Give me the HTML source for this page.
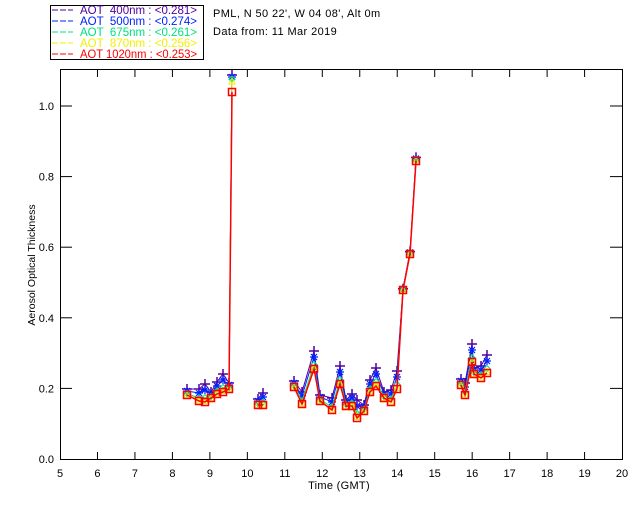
<!DOCTYPE html>
<html><head><meta charset="utf-8"><style>
html,body{margin:0;padding:0;background:#fff;width:640px;height:512px;overflow:hidden}
svg{display:block;font-family:"Liberation Sans",sans-serif}
</style></head><body>
<svg id="s" width="640" height="512" viewBox="0 0 640 512" xmlns="http://www.w3.org/2000/svg">
<rect x="50.5" y="5.5" width="153" height="54" fill="none" stroke="#000"/>
<g font-size="11.5">
<line x1="52" y1="10" x2="73" y2="10" stroke="#5000a0" stroke-dasharray="6,2"/><text x="80" y="14" fill="#5000a0" xml:space="preserve" textLength="117" lengthAdjust="spacingAndGlyphs">AOT  400nm : &lt;0.281&gt;</text>
<line x1="52" y1="21" x2="73" y2="21" stroke="#0020ff" stroke-dasharray="6,2"/><text x="80" y="25" fill="#0020ff" xml:space="preserve" textLength="117" lengthAdjust="spacingAndGlyphs">AOT  500nm : &lt;0.274&gt;</text>
<line x1="52" y1="32" x2="73" y2="32" stroke="#00e080" stroke-dasharray="6,2"/><text x="80" y="36" fill="#00e080" xml:space="preserve" textLength="117" lengthAdjust="spacingAndGlyphs">AOT  675nm : &lt;0.261&gt;</text>
<line x1="52" y1="43" x2="73" y2="43" stroke="#f0f000" stroke-dasharray="6,2"/><text x="80" y="47" fill="#f0f000" xml:space="preserve" textLength="117" lengthAdjust="spacingAndGlyphs">AOT  870nm : &lt;0.256&gt;</text>
<line x1="52" y1="54" x2="73" y2="54" stroke="#ff0000" stroke-dasharray="6,2"/><text x="80" y="58" fill="#ff0000" xml:space="preserve" textLength="117" lengthAdjust="spacingAndGlyphs">AOT 1020nm : &lt;0.253&gt;</text>
</g>
<g font-size="11" letter-spacing="0.4">
<text x="213" y="17" fill="#000">PML, N 50 22', W 04 08', Alt 0m</text>
<text x="213" y="35" fill="#000">Data from: 11 Mar 2019</text>
</g>
<rect x="60.5" y="69.5" width="562" height="390" fill="none" stroke="#000"/>
<g id="ax" stroke="#000"></g>
<g id="lab" font-size="11" fill="#000"></g>
<text x="339" y="489" font-size="11" text-anchor="middle" letter-spacing="0.3">Time (GMT)</text>
<text transform="translate(35,265) rotate(-90)" font-size="10.5" text-anchor="middle">Aerosol Optical Thickness</text>
<g id="dat"></g>
</svg>
<script>
var ns="http://www.w3.org/2000/svg";
function el(p,t,a,txt){var e=document.createElementNS(ns,t);for(var k in a)e.setAttribute(k,a[k]);if(txt)e.textContent=txt;document.getElementById(p).appendChild(e);return e;}
for(var h=5;h<=20;h++){var x=60+(h-5)*37.47;
 if(h>5&&h<20){el('ax','line',{x1:x,y1:460,x2:x,y2:452});el('ax','line',{x1:x,y1:69,x2:x,y2:77});}
 el('lab','text',{x:x,y:477,'text-anchor':'middle'},String(h));}
for(var i=0;i<=5;i++){var y=459-i*70.6;
 if(i>0){el('ax','line',{x1:60,y1:y,x2:72,y2:y});el('ax','line',{x1:622,y1:y,x2:610,y2:y});}
 el('lab','text',{x:54,y:y+4,'text-anchor':'end'},(i*0.2).toFixed(1));}
var groups=[
[[187,395],[199,401],[205,402],[211,398],[217,394],[223,392],[229,389],[232,92]],
[[258,405],[263,405]],
[[294,387],[302,404],[314,369],[320,401],[332,410],[340,384],[346,406],[352,406],[357,418],[364,411],[370,392],[376,386],[384,398],[391,402],[397,389],[403,290],[410,254],[416,161]],
[[461,385],[465,395],[472,362],[474,374],[481,378],[487,373]]];
var cols=[["#5000a0",-12],["#0020ff",-8],["#00e080",-3],["#f0f000",-1],["#ff0000",0]];
cols.forEach(function(c,ci){
 groups.forEach(function(g){
  var pts=g.map(function(p,j){var d=c[1]*(p[1]<350?0.2:1)*((j%3)/2+0.5);if(p[1]<120&&ci<4)d=-17+ci*2;return [p[0],p[1]+d];});
  el('dat','polyline',{points:pts.map(function(p){return p.join(',')}).join(' '),fill:'none',stroke:c[0],'stroke-width':ci==4?1.5:1});
  pts.forEach(function(p){
   if(ci==0){el('dat','path',{d:'M'+(p[0]-5)+','+p[1]+'h10M'+p[0]+','+(p[1]-5)+'v10',stroke:c[0],'stroke-width':1.5});}
   else if(ci==1){el('dat','path',{d:'M'+(p[0]-4)+','+p[1]+'h8M'+p[0]+','+(p[1]-4)+'v8M'+(p[0]-3)+','+(p[1]-3)+'l6,6M'+(p[0]-3)+','+(p[1]+3)+'l6,-6',stroke:c[0],'stroke-width':1.2});}
   else if(ci==2){el('dat','path',{d:'M'+p[0]+','+(p[1]-3)+'l3,3l-3,3l-3,-3z',fill:'none',stroke:c[0]});}
   else if(ci==3){el('dat','path',{d:'M'+(p[0]-3)+','+(p[1]+3)+'l3,-6l3,6z',fill:'none',stroke:c[0]});}
   else{el('dat','rect',{x:p[0]-3.5,y:p[1]-3.5,width:7,height:7,fill:'none',stroke:c[0],'stroke-width':1.5});}
  });
 });
});
</script>
</body></html>
